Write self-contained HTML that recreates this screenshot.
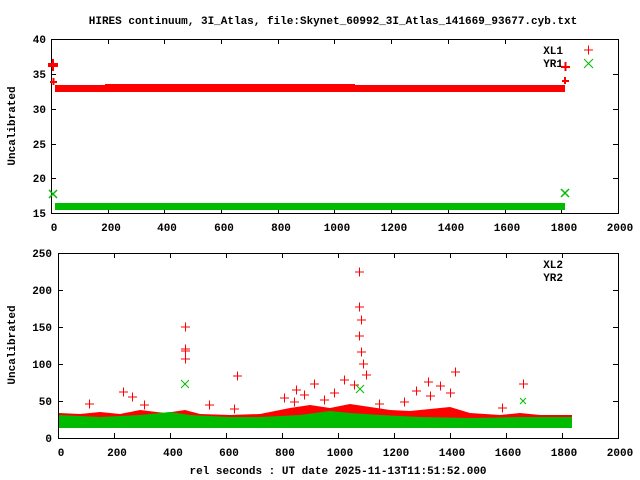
<!DOCTYPE html>
<html><head><style>
body{margin:0;background:#fff}
svg{display:block}
text{font-family:"Liberation Mono",monospace;font-weight:bold;font-size:11px;fill:#000}
</style></head><body>
<svg width="640" height="480" xmlns="http://www.w3.org/2000/svg">
<text x="333" y="24" text-anchor="middle">HIRES continuum, 3I_Atlas, file:Skynet_60992_3I_Atlas_141669_93677.cyb.txt</text>
<!-- top plot -->
<rect x="51.5" y="39.5" width="567" height="174" fill="none" stroke="#000"/>
<g stroke="#000">
<path d="M51 74.5h5M51 109.5h5M51 144.5h5M51 178.5h5M618 74.5h-5M618 109.5h-5M618 144.5h-5M618 178.5h-5M108.5 213v-5M164.5 213v-5M221.5 213v-5M278.5 213v-5M334.5 213v-5M391.5 213v-5M448.5 213v-5M505.5 213v-5M561.5 213v-5M108.5 39v5M164.5 39v5M221.5 39v5M278.5 39v5M334.5 39v5M391.5 39v5M448.5 39v5M505.5 39v5"/>
</g>
<g text-anchor="end">
<text x="46" y="43">40</text><text x="46" y="78">35</text><text x="46" y="113">30</text><text x="46" y="148">25</text><text x="46" y="182">20</text><text x="46" y="217">15</text>
</g>
<g text-anchor="middle">
<text x="54" y="231">0</text><text x="111" y="231">200</text><text x="167" y="231">400</text><text x="224" y="231">600</text><text x="281" y="231">800</text><text x="337" y="231">1000</text><text x="394" y="231">1200</text><text x="451" y="231">1400</text><text x="507" y="231">1600</text><text x="564" y="231">1800</text><text x="620" y="231">2000</text>
</g>
<text transform="translate(15,126) rotate(-90)" text-anchor="middle">Uncalibrated</text>
<text x="563" y="54" text-anchor="end">XL1</text>
<text x="563" y="67" text-anchor="end">YR1</text>
<path d="M584 50h9M588.5 45.5v9" stroke="#f00"/>
<path d="M584 59l9 9M593 59l-9 9" stroke="#0b0"/>
<rect x="55" y="85" width="510" height="7" fill="#f00"/>
<rect x="105" y="84" width="250" height="2" fill="#f00"/>
<rect x="55" y="203" width="510" height="7" fill="#0b0"/>
<rect x="70" y="208" width="75" height="2" fill="#0b0"/>
<path d="M48 64h10M53 59v10M48 66h10M53 61v10M50 82h7M53.5 78v7M561 67h9M565.5 62v9M562 81h7M565 77v7" stroke="#f00" stroke-width="2"/>
<path d="M49 190l8 8M57 190l-8 8M561 189l8 8M569 189l-8 8" stroke="#0b0" stroke-width="1.5"/>
<!-- bottom plot -->
<rect x="58.5" y="253.5" width="560" height="185" fill="none" stroke="#000"/>
<g stroke="#000">
<path d="M58 290.5h5M58 327.5h5M58 364.5h5M58 401.5h5M618 290.5h-5M618 327.5h-5M618 364.5h-5M618 401.5h-5M114.5 438v-5M170.5 438v-5M226.5 438v-5M282.5 438v-5M338.5 438v-5M394.5 438v-5M450.5 438v-5M506.5 438v-5M562.5 438v-5M114.5 253v5M170.5 253v5M226.5 253v5M282.5 253v5M338.5 253v5M394.5 253v5M450.5 253v5M506.5 253v5M562.5 253v5"/>
</g>
<g text-anchor="end">
<text x="52" y="257">250</text><text x="52" y="294">200</text><text x="52" y="331">150</text><text x="52" y="368">100</text><text x="52" y="405">50</text><text x="52" y="442">0</text>
</g>
<g text-anchor="middle">
<text x="61" y="456">0</text><text x="117" y="456">200</text><text x="173" y="456">400</text><text x="229" y="456">600</text><text x="285" y="456">800</text><text x="340" y="456">1000</text><text x="396" y="456">1200</text><text x="452" y="456">1400</text><text x="508" y="456">1600</text><text x="564" y="456">1800</text><text x="620" y="456">2000</text>
</g>
<text x="338" y="474" text-anchor="middle">rel seconds : UT date 2025-11-13T11:51:52.000</text>
<text transform="translate(15,345) rotate(-90)" text-anchor="middle">Uncalibrated</text>
<text x="563" y="268" text-anchor="end">XL2</text>
<text x="563" y="281" text-anchor="end">YR2</text>
<path d="M59 420 L59 413 L80 414 L100 412 L120 414 L140 410 L165 413 L185 410 L200 414 L230 415 L260 414 L290 408 L310 405 L330 408 L350 404 L370 407 L390 410 L410 411 L430 409 L450 407 L470 413 L500 415 L520 413 L540 415 L572 415 L572 421 L59 421Z" fill="#f00"/>
<path d="M59 427 L59 415 L100 417 L140 415 L170 412 L190 415 L230 417 L260 417 L300 415 L330 411 L350 413 L380 415 L420 417 L470 418 L520 417 L572 417 L572 428 L59 428Z" fill="#0b0"/>
<path d="M181 327h9M185.5 322.5v9M181 349h9M185.5 344.5v9M181 351h9M185.5 346.5v9M181 359h9M185.5 354.5v9M355 272h9M359.5 267.5v9M355 307h9M359.5 302.5v9M357 320h9M361.5 315.5v9M355 336h9M359.5 331.5v9M357 352h9M361.5 347.5v9M359 364h9M363.5 359.5v9M362 375h9M366.5 370.5v9M233 376h9M237.5 371.5v9M451 372h9M455.5 367.5v9M519 384h9M523.5 379.5v9M424 382h9M428.5 377.5v9M119 392h9M123.5 387.5v9M292 390h9M296.5 385.5v9M412 391h9M416.5 386.5v9M446 393h9M450.5 388.5v9M340 380h9M344.5 375.5v9M350 385h9M354.5 380.5v9M128 397h9M132.5 392.5v9M300 395h9M304.5 390.5v9M375 404h9M379.5 399.5v9M310 384h9M314.5 379.5v9M330 393h9M334.5 388.5v9M426 396h9M430.5 391.5v9M498 408h9M502.5 403.5v9M85 404h9M89.5 399.5v9M205 405h9M209.5 400.5v9M230 409h9M234.5 404.5v9M280 398h9M284.5 393.5v9M436 386h9M440.5 381.5v9M290 402h9M294.5 397.5v9M320 400h9M324.5 395.5v9M140 405h9M144.5 400.5v9M400 402h9M404.5 397.5v9" stroke="#f00"/>
<path d="M181 380l8 8M189 380l-8 8M356 385l8 8M364 385l-8 8M520 398l6 6M526 398l-6 6" stroke="#0b0"/>
</svg>
</body></html>
